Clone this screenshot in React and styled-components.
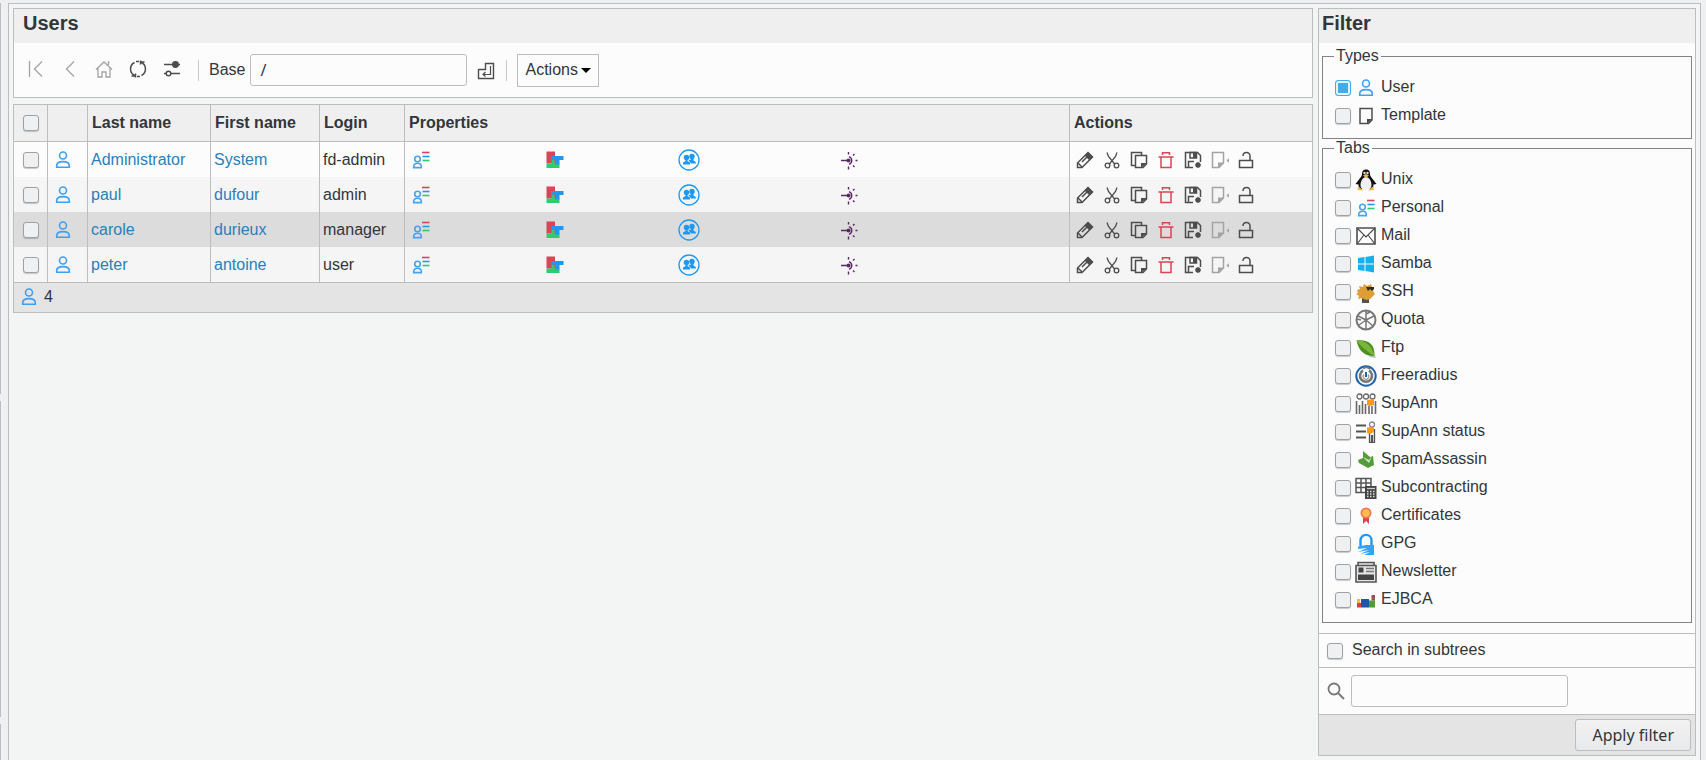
import React from "react";
import styled, { createGlobalStyle } from "styled-components";

const line = "#bbbdbe";
const ink = "#31363b";
const dark = "#4d4d4d";
const blue = "#1d99f3";
const red = "#da4453";
const green = "#2ecc71";

const GlobalStyle = createGlobalStyle`
  * { box-sizing: border-box; }
  body {
    margin: 0;
    background: #eff0f2;
    color: ${ink};
    font: 16px/18px "Liberation Sans", Arial, sans-serif;
  }
  input, button { font: inherit; color: inherit; margin: 0; }
  svg { display: block; flex: none; }
`;

const Page = styled.div`
  display: flex;
  height: 100vh;
  min-height: 760px;
  padding-top: 3px;
  overflow: hidden;
`;

const MenuEdge = styled.div`
  flex: 0 0 1px;
  display: flex;
  flex-direction: column;
  gap: 7px;
  margin-right: 7px;
`;

const MenuBlock = styled.div`
  flex: ${(p) => (p.$h ? `0 0 ${p.$h}px` : "1")};
  background: ${line};
`;

const Content = styled.main`
  flex: 1;
  min-width: 0;
  display: flex;
  align-items: flex-start;
  gap: 5px;
  padding: 4px;
  margin-right: 5px;
  border: 1px solid ${line};
  border-bottom: 0;
  background: #f3f5f4;
`;

const ListColumn = styled.section`
  flex: 1;
  min-width: 0;
  display: flex;
  flex-direction: column;
  gap: 6px;
`;

const Panel = styled.div`
  border: 1px solid ${line};
  background: #fcfcfc;
`;

const FilterPanel = styled(Panel).attrs({ as: "form" })`
  flex: 0 0 378px;
`;

const Title = styled.h2`
  margin: 0;
  height: 34px;
  padding: 2px ${(p) => p.$pad}px;
  background: #efefef;
  font-size: 20px;
  line-height: 24px;
  font-weight: bold;
`;

const Toolbar = styled.div`
  display: flex;
  align-items: center;
  height: 54px;
  padding-left: 11px;
`;

const ToolGroup = styled.div`
  display: flex;
  gap: 14px;
  padding-bottom: 4px;
`;

const IconButton = styled.button`
  display: grid;
  place-items: center;
  width: ${(p) => p.$size}px;
  height: ${(p) => p.$size}px;
  padding: 0;
  border: 0;
  background: none;
  opacity: ${(p) => (p.disabled ? 0.5 : 1)};
`;

const Separator = styled.span`
  width: 1px;
  height: 21px;
  margin: 0 10px 0 ${(p) => p.$before}px;
  background: #c8c9ca;
`;

const TextInput = styled.input`
  width: 217px;
  height: 32px;
  padding: 0 9px;
  border: 1px solid ${line};
  border-radius: 3px;
  background: #fcfcfc;
  font-family: "Noto Sans", sans-serif;
`;

const BaseLabel = styled.label`
  display: flex;
  align-items: center;
  gap: 5px;
  margin-right: 8px;
`;

const MenuButton = styled.button`
  display: flex;
  align-items: center;
  gap: 3px;
  height: 33px;
  padding: 0 7px;
  border: 1px solid ${line};
  background: #fcfcfc;
`;

const Caret = styled.span`
  border: 5px solid transparent;
  border-top-color: #000;
  border-bottom: 0;
`;

const Table = styled.table`
  width: 100%;
  table-layout: fixed;
  border-spacing: 0;
`;

const Col = styled.col`
  width: ${(p) => (p.$w ? `${p.$w}px` : "auto")};
`;

const Head = styled.th`
  height: 37px;
  padding: 0 4px;
  text-align: left;
  background: #efefef;
  border-bottom: 1px solid ${line};
  border-right: 1px solid ${line};
  &:last-child { border-right: 0; }
`;

const Row = styled.tr`
  background: ${(p) => (p.$hover ? "#dcdcdc" : p.$even ? "#f5f5f5" : "#fcfcfc")};
`;

const Cell = styled.td`
  height: 35px;
  padding: 0 3px;
  border-right: 1px solid ${line};
  &:last-child { border-right: 0; }
`;

const Center = styled.div`
  display: grid;
  place-items: center;
  padding-right: ${(p) => p.$right || 0}px;
`;

const Link = styled.a`
  color: #2980b9;
  text-decoration: none;
`;

const Properties = styled.div`
  display: grid;
  grid-template-columns: 134fr 134fr 160fr 228fr;
  padding-left: 2px;
`;

const RowActions = styled.div`
  display: flex;
  gap: 9px;
  padding-left: 3px;
`;

const Foot = styled.td`
  height: 30px;
  padding: 0 4px 2px;
  background: #e4e4e4;
  border-top: 1px solid ${line};
`;

const Count = styled.div`
  display: flex;
  align-items: center;
  gap: 4px;
`;

const Checkbox = styled.input.attrs({ type: "checkbox" })`
  appearance: none;
  flex: none;
  display: block;
  width: 16px;
  height: 16px;
  border: 1px solid #9fa2a5;
  border-radius: 3px;
  background: #eff0f1;
  box-shadow: 0 1px 1px rgba(0, 0, 0, 0.2);
  &:checked {
    border-color: #3daee9;
    background: #3daee9;
    box-shadow: inset 0 0 0 2px #e3f3fc;
  }
`;

const Fieldset = styled.fieldset`
  margin: 0 3px;
  padding: 9px 11px 8px;
  border: 1px solid #838383;
  &:first-of-type { margin-top: 4px; }
`;

const Legend = styled.legend`
  padding: 0 2px;
`;

const Option = styled.label`
  display: flex;
  align-items: center;
  gap: 4px;
  height: 28px;
  padding-left: 1px;
`;

const OptionText = styled.span`
  padding-bottom: 3px;
`;

const FilterRow = styled.div`
  display: flex;
  align-items: center;
  gap: ${(p) => p.$gap}px;
  height: ${(p) => p.$h}px;
  margin-top: ${(p) => p.$top || 0}px;
  padding-left: 8px;
  border-top: 1px solid ${line};
`;

const SearchLabel = styled.label`
  padding-bottom: 2px;
`;

const FilterFoot = styled.div`
  display: flex;
  justify-content: flex-end;
  padding: 4px;
  border-top: 1px solid ${line};
  background: #e4e4e4;
`;

const ApplyButton = styled.button`
  height: 32px;
  padding: 0 16px;
  border: 1px solid ${line};
  border-radius: 3px;
  background: linear-gradient(#f2f2f3, #e8e9ea);
  font-family: "Noto Sans", sans-serif;
`;

/* Every drawing is on a 22-unit grid */
const Svg = ({ children, size = 22, stroke = dark, ...rest }) => (
  <svg width={size} height={size} viewBox={size === 18 ? "2 2 18 18" : "0 0 22 22"} fill="none" stroke={stroke} strokeWidth="1.3" aria-hidden="true" {...rest}>
    {children}
  </svg>
);

const drawings = {
  first: <path d="M4.5 3v16M17 3.5L9.5 11l7.500 7.500" />,
  previous: <path d="M15 3.500L7.500 11l7.500 7.500" />,
  home: <path d="M3 11.500L11 4l8 7.500M5 10.500v8.500h4v-5h4v5h4v-8.500M15.500 7V4h1" />,
  refresh: (
    <g strokeWidth="1.500">
      <path d="M7.500 4.500a7.300 7.300 0 0 0 .5 13.200M8.500 19.500v-4M8.500 18H4.500" />
      <path d="M14.500 17.500a7.300 7.300 0 0 0-.5-13.200M13.500 2.500v4M13.500 4h4M9 3.500h3M10 18.500h3" />
    </g>
  ),
  sliders: (
    <g strokeWidth="1.500">
      <path d="M3 6.500h16M3 15.500h3M9 15.500h10" />
      <circle cx="14.500" cy="6.500" r="2.700" fill={dark} />
      <circle cx="7.500" cy="15.500" r="2.300" />
    </g>
  ),
  enter: (
    <g strokeWidth="1.400">
      <path d="M10.500 3.500h8v15h-15v-9h7z" />
      <path d="M15.500 6v8.500H8M10.500 12L8 14.500l2.500 2" strokeWidth="1.200" />
    </g>
  ),
  user: (
    <g stroke="#3f9ff0" strokeWidth="1.600">
      <circle cx="11" cy="6.500" r="3.500" />
      <path d="M4.700 18.300v-1.500c0-3.300 3-4.200 6.300-4.200s6.300.9 6.300 4.200v1.500z" />
    </g>
  ),
  card: (
    <g stroke="#45a4ee" strokeWidth="1.600">
      <circle cx="7.500" cy="10" r="2.800" />
      <path d="M3.700 18.600v-1c0-2.200 1.500-3.300 3.800-3.300s3.800 1.100 3.800 3.300v1z" />
      <path d="M12 3.500h7.500" stroke={red} />
      <path d="M12.500 7.500h7" stroke={blue} />
      <path d="M12.500 11.500h7" stroke={green} />
    </g>
  ),
  blocks: (
    <g stroke="none">
      <path d="M2.500 2.500h8.500v12H2.500z" fill={red} />
      <path d="M2.500 14.500h5v-4h3v4h5v4.500h-13z" fill={green} />
      <path d="M7 7h12.500v4h-4v4.500H11v-5H7z" fill={blue} />
    </g>
  ),
  group: (
    <g stroke={blue}>
      <circle cx="11" cy="11" r="10" strokeWidth="1.300" />
      <g fill={blue} stroke="none">
        <circle cx="8.500" cy="8.500" r="2.700" />
        <path d="M5 15.500v-2l2.500-1.500V9h2v3l2.500 1.500v2z" />
        <circle cx="14" cy="7.500" r="2.700" />
        <path d="M10.500 11l2.500-.5V8h2.500v3.500l2.300 1.500v1.500H13z" />
      </g>
    </g>
  ),
  radiate: (
    <g stroke="#5a2a67" strokeWidth="1.400">
      <path d="M3 11.500h7M17.500 11.500h2M10.500 3v2.500M10.500 17.500v3M15 6.500l1.500-1.500M15 16.500l1.500 1.500" />
      <path d="M11 7.700a4 4 0 0 1 0 7.600" />
      <circle cx="10.500" cy="11.500" r="2" fill="#5a2a67" stroke="none" />
    </g>
  ),
  edit: (
    <g strokeWidth="1.500">
      <path d="M3.500 18.500v-4.500L14 3.500 18.500 8 8 18.500z" />
      <path d="M14 3l5 5-3.500 3.500-5-5z" fill={dark} stroke="none" />
      <path d="M4 14l4 4M8 13l5-5" />
    </g>
  ),
  cut: (
    <g strokeWidth="1.300">
      <path d="M6 3.500l1.500 4 6.500 8M16 3.500l-1.500 4-6.500 8" />
      <circle cx="6.500" cy="16.500" r="2.300" />
      <circle cx="15.500" cy="16.500" r="2.300" />
    </g>
  ),
  copy: (
    <g strokeWidth="1.500">
      <path d="M7 16.500H3.500v-13h10V6" />
      <path d="M7.500 6.500h11V15L15 18.500H7.500z" />
      <path d="M13 19v-5h6z" fill={dark} stroke="none" />
    </g>
  ),
  remove: <path d="M3.500 8h15M7.500 6V3.700h7V6M6 8v10.500h10V8" stroke={red} strokeWidth="1.500" />,
  save: (
    <g strokeWidth="1.500">
      <path d="M11 18.500H3.500v-15h12l3 3V13M6.500 18v-5.500H12" />
      <path d="M8 3.500h6.500V9H8z" />
      <path d="M11 3.500h3.500V9H11z" fill={dark} stroke="none" />
      <path d="M16 13v6M13 16h6M14 14l4 4M18 14l-4 4" />
    </g>
  ),
  fromTemplate: (
    <g stroke="#a4a4a4" strokeWidth="1.500">
      <path d="M3.500 3.500h11V14L10 18.500H3.500z" />
      <path d="M9 19v-5.500h6z" fill="#a4a4a4" stroke="none" />
      <path d="M20 9.500v4M18.500 10.500v2" />
    </g>
  ),
  unlock: <path d="M3.500 11.500h13v7h-13zM14 11V7c0-5-7-4.500-7 0" strokeWidth="1.500" />,
  template: (
    <g strokeWidth="1.500">
      <path d="M5 3.500h12V15l-3.500 3.500H5z" />
      <path d="M12 19v-5h5.500z" fill={dark} stroke="none" />
    </g>
  ),
  penguin: (
    <g stroke="none">
      <path d="M11 .5c-3 0-4 2-4 4.500 0 2-1 3-3 5.500L.5 15l3 .5.500 4.500h14l.5-4.500 3-.5-3.500-4.500C16 8 15 7 15 5c0-2.500-1-4.500-4-4.500z" fill="#111" />
      <path d="M11 8c-3 0-5.500 4-5.500 8s3 5 5.500 5 5.500-1 5.500-5S14 8 11 8z" fill="#eef0f3" />
      <circle cx="9.500" cy="4" r="1.200" fill="#ddd" />
      <circle cx="12.500" cy="4" r="1.200" fill="#ddd" />
      <path d="M8 6.500l3-1.500 3 1.500L11 9zM2.500 21l1-3.500 5 4zM13 21.500l5-4 1 3.500z" fill="#f4b544" />
    </g>
  ),
  mail: (
    <g strokeWidth="1.600">
      <path d="M2 3h18v16H2z" />
      <path d="M2 3l9 9 9-9M2 19l7-9M20 19l-7-9" strokeWidth="1.200" />
    </g>
  ),
  windows: <path d="M3 5l6.500-1v6.500H3zM10.500 4L19 2.500v8h-8.500zM3 11.500h6.500V18L3 17zM10.500 11.500H19v8L10.500 18z" fill="#15b1ee" stroke="none" />,
  fish: (
    <g stroke="none">
      <path d="M7 14h8l-1 3v5H7z" fill="#57504a" />
      <path d="M2 9l3-1-1-3 4 1 1-3 3 2 4-2 1 3 2 2-1 2 2 3-3 3-2 2-4 1-4-2-4 1 1-3-3-2 2-1z" fill="#dc9e35" />
      <path d="M11 6h8v2l-2 2-2-2-2 2z" fill="#302c26" />
    </g>
  ),
  wheel: (
    <g stroke="#777" strokeWidth="1.500">
      <circle cx="11" cy="11" r="9.500" strokeWidth="2" />
      <path d="M11 11V2M11 11l8-4M11 11l7 6M11 11v9M11 11l-7 5M11 11L3 7M11 5l4-2M6 11l-4-1" />
    </g>
  ),
  leaf: (
    <g stroke="none">
      <path d="M13 18l7 1 1 2-6-1z" fill="#bbb" />
      <path d="M1.500 3.500C12 2 20 6 19.500 19 10 19 4 15 1.500 3.500z" fill="#4a8f22" />
      <path d="M1.500 3.500C11 3 17 9 19.500 19 13 15 7 11 1.500 3.500z" fill="#7db53a" />
    </g>
  ),
  radius: (
    <g>
      <circle cx="11" cy="11" r="9.700" stroke="#1c62aa" strokeWidth="2" />
      <path d="M8 5.500a6 6 0 1 0 6 0" stroke="#777" strokeWidth="2.600" />
      <path d="M9 9.500a2.800 2.800 0 1 0 4 0" stroke="#999" strokeWidth="1.200" />
      <path d="M8 3.500c2-1.500 5-1.500 7 .5" stroke="#777" strokeWidth="2" />
      <path d="M11 7v5" stroke="#1c62aa" strokeWidth="2" />
    </g>
  ),
  people: (
    <g stroke="#686868">
      <circle cx="4.500" cy="3.500" r="2.500" />
      <circle cx="11" cy="3.500" r="2.500" />
      <circle cx="17.500" cy="3.500" r="2.500" />
      <path d="M1.500 8v13M4.500 12v9M7.500 8v13M10.500 11v10M14 13v8M17 13v8M20.500 8v13" strokeWidth="1.600" />
      <path d="M12 7l7-1v6l-5 1-2-1z" fill="#f69a20" stroke="none" />
    </g>
  ),
  personStatus: (
    <g stroke="#555">
      <path d="M1 4.500h10M1 10.500h10M1 16.500h10" strokeWidth="2.200" />
      <circle cx="17" cy="3.500" r="2.500" stroke="#888" />
      <path d="M14.500 11v10.500h2V14M19.500 8v13.500h-2V14" />
      <path d="M12 6.500l7-.5v5l-4 2-3-1z" fill="#f69a20" stroke="none" />
    </g>
  ),
  spam: (
    <g stroke="none">
      <path d="M8 2l7 6 3-1 1 9-6 3-9-5-1-3 5-2z" fill="#559b3c" />
      <path d="M8 8l6 3 3-4-3 7z" fill="#cfe6c6" />
    </g>
  ),
  contract: (
    <g>
      <path d="M1 1.500h15v14H1zM1 6h15M1 10.500h11M6 2v13M11 2v8" stroke="#555" strokeWidth="1.500" />
      <path d="M10 9h11.500v13H10z" fill="#444" stroke="none" />
      <path d="M12 11.500h8" stroke="#ccc" />
      <path d="M12 14.500h8M12 17h8M12 19.500h8" stroke="#ddd" strokeDasharray="1.500 1.500" />
    </g>
  ),
  certificate: (
    <g stroke="none">
      <path d="M8 11h6v8l-3-3-3 3z" fill={red} />
      <circle cx="11" cy="8" r="5.500" fill="#f47750" />
      <circle cx="11" cy="8" r="3.800" fill="#fdbc4b" />
    </g>
  ),
  gpg: (
    <g>
      <path d="M5.500 13V7.500c0-7.500 11-7.500 11 0V13" stroke={blue} strokeWidth="2.400" />
      <path d="M3 13.500l8-1.500h8v10H9l6-3-10 2 9-4-11 2 9-4-9 1z" fill="#35a3f4" stroke="none" />
    </g>
  ),
  newsletter: (
    <g stroke="#555">
      <path d="M1 4.500h20v16.500H1zM3 4.500V1.500h16v3" fill="#e6e6e6" strokeWidth="1.600" />
      <path d="M3 13.500h16v5.500H3zM3.500 6.500h5v5h-5z" fill="#444" stroke="none" />
      <path d="M11 7.500h8M11 10.500h8" stroke="#777" />
    </g>
  ),
  bars: (
    <g stroke="none">
      <path d="M2 10h3v4H2z" fill="#f0bf28" />
      <path d="M2 14h4v4.500H2z" fill="#e33b30" />
      <path d="M6 10h8v8.500H6z" fill="#1b59a6" />
      <path d="M14 11.500h6v7h-6z" fill="#4f9b38" />
      <path d="M16.500 6H20v5.500h-3.500z" fill="#985451" />
    </g>
  ),
  search: (
    <g stroke="#777" strokeWidth="1.800">
      <circle cx="9" cy="9" r="5.500" />
      <path d="M13 13l6 6" />
    </g>
  ),
};

const Icon = ({ name, size }) => <Svg size={size}>{drawings[name]}</Svg>;

const users = [
  ["Administrator", "System", "fd-admin"],
  ["paul", "dufour", "admin"],
  ["carole", "durieux", "manager"],
  ["peter", "antoine", "user"],
];

const tools = [
  ["first", "Root", true],
  ["previous", "Up", true],
  ["home", "Home", true],
  ["refresh", "Reload", false],
  ["sliders", "Settings", false],
];

const actions = [
  ["edit", "Edit"],
  ["cut", "Cut"],
  ["copy", "Copy"],
  ["remove", "Remove"],
  ["save", "Snapshot"],
  ["fromTemplate", "Apply template"],
  ["unlock", "Lock"],
];

const types = [
  ["user", "User", true],
  ["template", "Template"],
];

const tabs = [
  ["penguin", "Unix"],
  ["card", "Personal"],
  ["mail", "Mail"],
  ["windows", "Samba"],
  ["fish", "SSH"],
  ["wheel", "Quota"],
  ["leaf", "Ftp"],
  ["radius", "Freeradius"],
  ["people", "SupAnn"],
  ["personStatus", "SupAnn status"],
  ["spam", "SpamAssassin"],
  ["contract", "Subcontracting"],
  ["certificate", "Certificates"],
  ["gpg", "GPG"],
  ["newsletter", "Newsletter"],
  ["bars", "EJBCA"],
];

const OptionGroup = ({ title, options }) => (
  <Fieldset>
    <Legend>{title}</Legend>
    {options.map(([icon, label, checked]) => (
      <Option key={label}>
        <Checkbox defaultChecked={checked} />
        <Icon name={icon} />
        <OptionText>{label}</OptionText>
      </Option>
    ))}
  </Fieldset>
);

export default function App() {
  return (
    <Page>
      <GlobalStyle />
      <MenuEdge>
        <MenuBlock $h={391} />
        <MenuBlock $h={316} />
        <MenuBlock />
      </MenuEdge>
      <Content>
        <ListColumn>
          <Panel>
            <Title $pad={9}>Users</Title>
            <Toolbar>
              <ToolGroup>
                {tools.map(([icon, label, disabled]) => (
                  <IconButton key={icon} $size={20} type="button" aria-label={label} disabled={disabled}>
                    <Icon name={icon} />
                  </IconButton>
                ))}
              </ToolGroup>
              <Separator $before={17} />
              <BaseLabel>
                Base
                <TextInput type="text" defaultValue="/" />
              </BaseLabel>
              <IconButton $size={20} type="button" aria-label="Submit">
                <Icon name="enter" />
              </IconButton>
              <Separator $before={11} />
              <MenuButton type="button">
                Actions
                <Caret />
              </MenuButton>
            </Toolbar>
          </Panel>
          <Panel>
            <Table>
              <colgroup>
                <Col $w={34} />
                <Col $w={40} />
                <Col $w={123} />
                <Col $w={109} />
                <Col $w={85} />
                <Col />
                <Col $w={242} />
              </colgroup>
              <thead>
                <tr>
                  <Head><Center><Checkbox aria-label="Select all" /></Center></Head>
                  <Head />
                  <Head>Last name</Head>
                  <Head>First name</Head>
                  <Head>Login</Head>
                  <Head>Properties</Head>
                  <Head>Actions</Head>
                </tr>
              </thead>
              <tbody>
                {users.map(([last, first, login], i) => (
                  <Row key={login} $even={i > 0} $hover={login === "manager"}>
                    <Cell><Center><Checkbox aria-label={`Select ${login}`} /></Center></Cell>
                    <Cell><Center $right={10}><Icon name="user" /></Center></Cell>
                    <Cell><Link href="#">{last}</Link></Cell>
                    <Cell><Link href="#">{first}</Link></Cell>
                    <Cell>{login}</Cell>
                    <Cell>
                      <Properties>
                        <Icon name="card" />
                        <Icon name="blocks" />
                        <Icon name="group" />
                        <Icon name="radiate" />
                      </Properties>
                    </Cell>
                    <Cell>
                      <RowActions>
                        {actions.map(([icon, label]) => (
                          <IconButton key={icon} $size={18} type="button" aria-label={label}>
                            <Icon name={icon} size={18} />
                          </IconButton>
                        ))}
                      </RowActions>
                    </Cell>
                  </Row>
                ))}
              </tbody>
              <tfoot>
                <tr>
                  <Foot colSpan={7}>
                    <Count><Icon name="user" />4</Count>
                  </Foot>
                </tr>
              </tfoot>
            </Table>
          </Panel>
        </ListColumn>
        <FilterPanel>
          <Title $pad={3}>Filter</Title>
          <OptionGroup title="Types" options={types} />
          <OptionGroup title="Tabs" options={tabs} />
          <FilterRow $h={34} $gap={9} $top={10}>
            <Checkbox id="subtrees" />
            <SearchLabel htmlFor="subtrees">Search in subtrees</SearchLabel>
          </FilterRow>
          <FilterRow $h={47} $gap={6}>
            <Icon name="search" size={18} />
            <TextInput type="text" aria-label="Search" />
          </FilterRow>
          <FilterFoot>
            <ApplyButton type="button">Apply filter</ApplyButton>
          </FilterFoot>
        </FilterPanel>
      </Content>
    </Page>
  );
}
